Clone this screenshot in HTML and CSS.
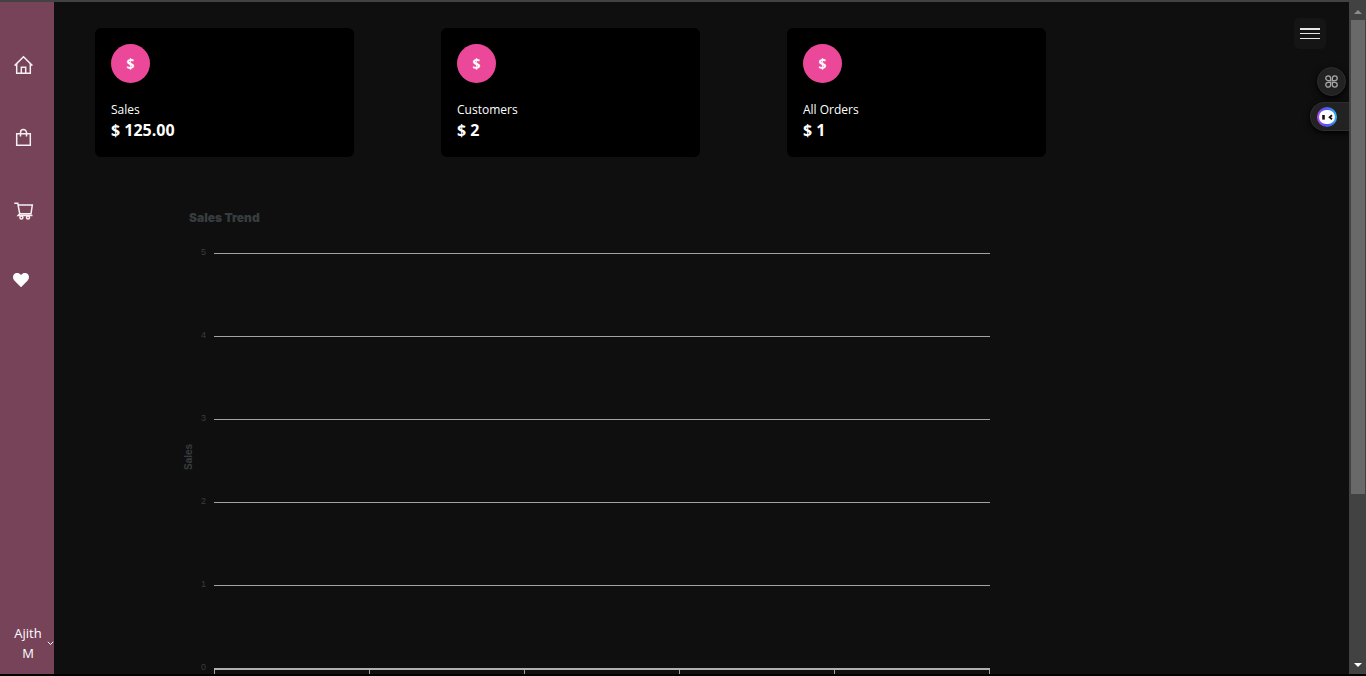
FILE: index.html
```html
<!DOCTYPE html>
<html lang="en">
<head>
<meta charset="utf-8">
<title>Dashboard</title>
<link rel="stylesheet" href="styles.css">
</head>
<body>
<div class="app">
  <aside class="sidebar">
    <nav class="nav">
      <a class="nav-link" href="#" aria-label="Home">
        <svg width="20" height="20" viewBox="0 0 20 20" fill="none" stroke="currentColor" stroke-width="1.5"><path d="M.6 10.600 9.500 1.800l8.900 8.800M2.700 9v9.200h13.600V9M7.300 18v-5.800h4.400V18"/></svg>
      </a>
      <a class="nav-link" href="#" aria-label="Products">
        <svg width="20" height="20" viewBox="0 0 20 20" fill="none" stroke="currentColor" stroke-width="1.5"><path d="M2.700 5.700h13.600v11.600H2.700zM6.500 8.400V4.600a3 3 0 0 1 6 0v3.800"/></svg>
      </a>
      <a class="nav-link" href="#" aria-label="Orders">
        <svg width="20" height="20" viewBox="0 0 20 20" fill="none" stroke="currentColor" stroke-width="1.5"><path d="M.3 2.300h3.500l1.900 10.400h11.300L18.300 4H4.300M5.700 12.700l-1.600 1.900h14.400"/><circle cx="7.400" cy="16.600" r="1.500"/><circle cx="14" cy="16.600" r="1.500"/></svg>
      </a>
      <a class="nav-link nav-heart" href="#" aria-label="Wishlist">
        <svg width="18" height="18" viewBox="0 0 18 18" fill="currentColor"><path d="M9 16.200 2.300 9.400C.7 7.700.6 5 2 3.300 3.700 1.500 6.600 1.500 8.200 3.200L9 4l.8-.8c1.600-1.700 4.500-1.700 6.200.1 1.400 1.700 1.300 4.400-.3 6.100z"/></svg>
      </a>
    </nav>
    <button class="user" type="button">
      <span class="user-name">Ajith M</span>
      <svg width="7" height="5" viewBox="0 0 7 5" fill="none" stroke="currentColor"><path d="M.8.8 3.500 3.500 6.200.8"/></svg>
    </button>
  </aside>

  <main class="main">
    <section class="cards">
      <article class="card">
        <span class="badge">$</span>
        <p class="card-label">Sales</p>
        <p class="card-value">$ 125.00</p>
      </article>
      <article class="card">
        <span class="badge">$</span>
        <p class="card-label">Customers</p>
        <p class="card-value">$ 2</p>
      </article>
      <article class="card">
        <span class="badge">$</span>
        <p class="card-label">All Orders</p>
        <p class="card-value">$ 1</p>
      </article>
    </section>

    <section class="chart">
      <h2 class="chart-title">Sales Trend</h2>
      <div class="chart-body">
        <div class="axis-title">Sales</div>
        <div class="scale">
          <span>5</span><span>4</span><span>3</span><span>2</span><span>1</span><span>0</span>
        </div>
        <div class="plot">
          <div class="band"></div><div class="band"></div><div class="band"></div><div class="band"></div><div class="band"></div>
          <div class="ticks"><i></i><i></i><i></i><i></i><i></i></div>
        </div>
      </div>
    </section>

    <button class="menu" type="button" aria-label="Menu">
      <svg width="20" height="11" viewBox="0 0 20 11" fill="#e5e7eb"><path d="M0 0h20v2H0zM0 5h20v1H0zM0 10h20v1H0z"/></svg>
    </button>
    <div class="floating">
      <button class="float-apps" type="button" aria-label="Apps">
        <svg width="13" height="13" viewBox="0 0 13 13" fill="none" stroke="#a6a6a6" stroke-width="1.300"><path d="M5.600 5.600H3.200a2.400 2.400 0 1 1 2.400-2.400zM7.400 5.600V3.200a2.400 2.400 0 1 1 2.400 2.400zM5.600 7.400v2.400a2.400 2.400 0 1 1-2.400-2.400zM7.400 7.400h2.400a2.400 2.400 0 1 1-2.400 2.400z"/></svg>
      </button>
      <button class="float-bot" type="button" aria-label="Assistant">
        <svg width="20" height="20" viewBox="0 0 20 20">
          <defs><linearGradient id="ring" x1="0" y1=".7" x2="1" y2=".6"><stop offset="0" stop-color="#c04df0"/><stop offset=".35" stop-color="#5b4df5"/><stop offset=".7" stop-color="#3d6ff5"/><stop offset="1" stop-color="#35b8ee"/></linearGradient></defs>
          <circle cx="10" cy="10" r="10" fill="url(#ring)"/>
          <rect x="2" y="3" width="16" height="14" rx="7" fill="#fff"/>
          <path d="M5.200 8h2.600v4.600H5.200z" fill="#111"/>
          <path d="M15 8.200 12.600 10.300 15 12.300" fill="none" stroke="#111" stroke-width="1.800"/>
        </svg>
      </button>
    </div>
  </main>

  <div class="scrollbar" aria-hidden="true">
    <svg width="8" height="4" viewBox="0 0 8 4" fill="#8c8c8c"><path d="M4 0 8 4H0z"/></svg>
    <div class="track"><div class="thumb"></div></div>
    <svg width="8" height="4" viewBox="0 0 8 4" fill="#fff"><path d="M0 0h8L4 4z"/></svg>
  </div>
</div>
</body>
</html>
```

FILE: styles.css
```css
* {
  box-sizing: border-box;
}

body {
  margin: 0;
  background: #0f0f0f;
  color: #fff;
  font-family: "Open Sans", "Noto Sans", sans-serif;
  font-size: 13px;
  line-height: 20px;
}

button {
  padding: 0;
  border: 0;
  color: inherit;
  font: inherit;
  cursor: pointer;
}

svg {
  display: block;
  flex: none;
}

.app {
  display: flex;
  height: 100vh;
  border-top: 2px solid #424242;
  border-bottom: 2px solid #000;
  overflow: hidden;
}

.sidebar {
  display: flex;
  flex-direction: column;
  justify-content: space-between;
  flex: none;
  width: 54px;
  padding: 53px 0 11px;
  background: #774359;
}

.nav {
  display: flex;
  flex-direction: column;
  gap: 53px;
  padding-left: 14px;
}

.nav-link {
  color: #f7eef2;
}

.nav-heart {
  margin: -3px 0 0 -2px;
  color: #fff;
}

.user {
  display: flex;
  align-items: center;
  justify-content: flex-end;
  gap: 5px;
  background: none;
}

.user-name {
  width: 28px;
  text-align: center;
}

.main {
  position: relative;
  flex: 1;
  min-width: 0;
  overflow: hidden;
}

.cards {
  display: flex;
  gap: 87px;
  padding: 26px 0 0 41px;
}

.card {
  flex: 0 1 259px;
  padding: 16px;
  border-radius: 6px;
  background: #000;
}

.badge {
  display: flex;
  align-items: center;
  justify-content: center;
  width: 39px;
  height: 39px;
  margin-bottom: 17px;
  border-radius: 50%;
  background: #ec4899;
  font-size: 14px;
  font-weight: 700;
}

.card-label,
.card-value {
  margin: 0;
}

.card-label {
  font-size: 12px;
}

.card-value {
  font-size: 16px;
  font-weight: 700;
  line-height: 21px;
}

.chart {
  margin: 53px 359px 0 130px;
  color: #373d3f;
  font-family: "Liberation Sans", Arial, sans-serif;
}

.chart-title {
  margin: 0 0 27px 5px;
  font-family: Inter, "Liberation Sans", sans-serif;
  font-size: 12px;
  font-weight: 900;
  line-height: 16px;
}

.chart-body {
  display: flex;
}

.axis-title {
  width: 10px;
  padding-top: 20px;
  font-size: 10px;
  font-weight: 700;
  line-height: 10px;
  text-align: center;
  writing-mode: vertical-rl;
  transform: rotate(180deg);
}

.scale {
  display: flex;
  flex-direction: column;
  width: 20px;
  padding-right: 8px;
  font-size: 9px;
  line-height: 12px;
  text-align: right;
}

.scale span {
  height: 83px;
  margin-top: -7px;
  margin-bottom: 7px;
}

.scale span:last-child {
  height: 12px;
  margin-bottom: 0;
}

.plot {
  flex: 1;
}

.band {
  height: 83px;
  border-top: 1px solid #a3a3a3;
}

.ticks {
  display: flex;
  height: 12px;
  border-top: 2px solid #b0b0b0;
  border-right: 1px solid #a3a3a3;
}

.ticks i {
  flex: 1;
  border-left: 1px solid #a3a3a3;
}

.menu {
  position: absolute;
  top: 16px;
  right: 23px;
  display: flex;
  align-items: center;
  justify-content: center;
  width: 32px;
  height: 31px;
  border-radius: 5px;
  background: #151515;
}

.floating {
  position: absolute;
  top: 65px;
  right: 0;
  display: flex;
  flex-direction: column;
  align-items: flex-end;
  gap: 6px;
}

.float-apps,
.float-bot {
  display: flex;
  align-items: center;
  height: 29px;
  border: 1px solid #2e2e2e;
  background: #222;
  box-shadow: 0 2px 6px #000;
}

.float-apps {
  justify-content: center;
  width: 29px;
  margin-right: 3px;
  border-radius: 50%;
}

.float-bot {
  width: 39px;
  padding-left: 6px;
  border-right: 0;
  border-radius: 15px 0 0 15px;
}

.scrollbar {
  display: flex;
  flex-direction: column;
  align-items: center;
  gap: 6px;
  flex: none;
  width: 17px;
  padding: 8px 0 7px;
  background: #424242;
}

.track {
  flex: 1;
  width: 14px;
}

.thumb {
  height: calc(75% - 4px);
  background: #696969;
}
```
